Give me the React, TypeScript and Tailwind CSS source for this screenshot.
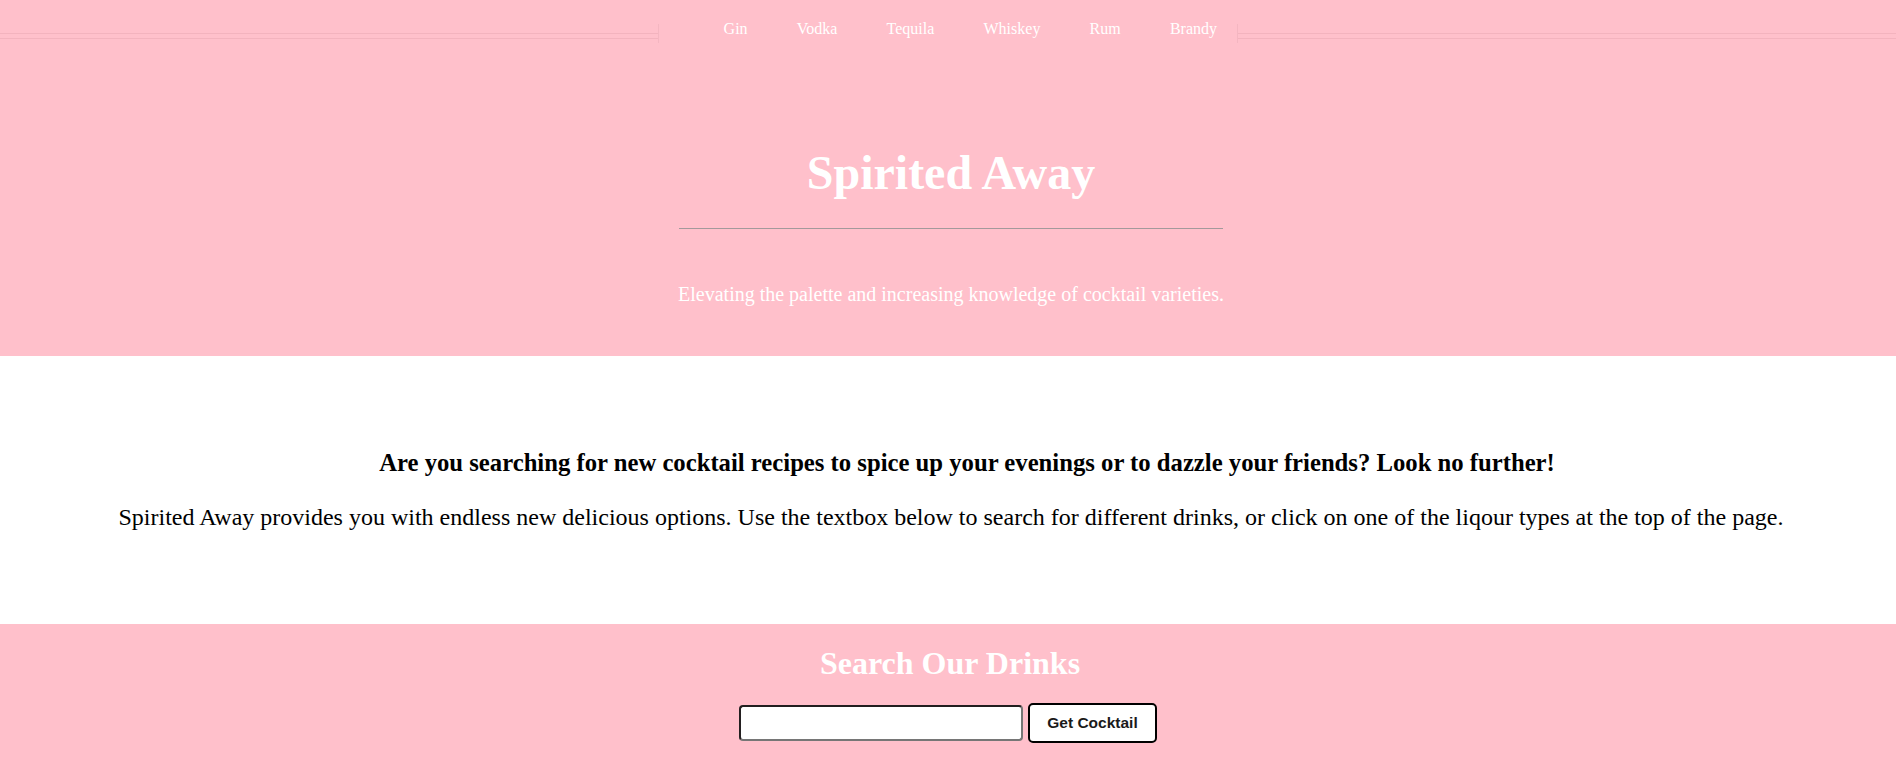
import React from "react";

const serif = { fontFamily: '"Liberation Serif", "Times New Roman", serif' };

export default function App() {
  const items = ["Gin", "Vodka", "Tequila", "Whiskey", "Rum", "Brandy"];
  return (
    <div className="w-full min-h-screen bg-white" style={serif}>
      <header className="bg-[#ffc0cb] h-[356px] flex flex-col items-center">
        <div className="w-full flex items-start pt-[24px]">
          <div className="flex-1 flex flex-col pt-[9px]">
            <div className="h-px bg-[#f3b3be]" />
            <div className="h-[4px]" />
            <div className="h-px bg-[#f3b3be]" />
          </div>
          <div className="w-[580px] h-[19px] border-x border-[#f4b6c1]">
            <ul className="-mt-[4px] pl-[40px] flex text-white text-[16px] leading-[18px]">
              {items.map((i) => (
                <li key={i} className="px-[24.6px]">
                  <a href="#">{i}</a>
                </li>
              ))}
            </ul>
          </div>
          <div className="flex-1 flex flex-col pt-[9px]">
            <div className="h-px bg-[#f3b3be]" />
            <div className="h-[4px]" />
            <div className="h-px bg-[#f3b3be]" />
          </div>
        </div>
        <div className="w-full flex flex-col items-center pl-[6px]">
          <h1 className="mt-[102px] text-white font-bold text-[48px] leading-[55px]">
            Spirited Away
          </h1>
          <hr className="mt-[28px] w-[544px] border-0 border-t border-[#a3999b]" />
          <p className="mt-[54px] text-white text-[20px] leading-[23px]">
            Elevating the palette and increasing knowledge of cocktail varieties.
          </p>
        </div>
      </header>
      <section className="h-[268px] pl-[6px] flex flex-col items-center justify-center text-black">
        <p className="pl-[32px] font-bold text-[24.7px] leading-[28px]">
          Are you searching for new cocktail recipes to spice up your evenings or to dazzle your friends? Look no further!
        </p>
        <p className="mt-[27px] text-[24px] leading-[27px]">
          Spirited Away provides you with endless new delicious options. Use the textbox below to search for different drinks, or click on one of the liqour types at the top of the page.
        </p>
      </section>
      <section className="bg-[#ffc0cb] h-[135px] flex flex-col items-center pt-[21px]">
        <h2 className="pl-[4px] text-white font-bold text-[32px] leading-[37px]">Search Our Drinks</h2>
        <div className="mt-[21px] flex items-center gap-[5px]">
          <input
            type="text"
            className="w-[284px] h-[36px] bg-white rounded-[4px] border-2 border-t-[#231f20] border-l-[#231f20] border-b-[#767676] border-r-[#767676] outline-none px-2"
          />
          <button
            className="w-[129px] h-[40px] bg-white border-2 border-black rounded-[5px] text-[15.5px] font-bold text-[#1a1a1a]"
            style={{ fontFamily: '"Liberation Sans", Arial, sans-serif' }}
          >
            Get Cocktail
          </button>
        </div>
      </section>
    </div>
  );
}
